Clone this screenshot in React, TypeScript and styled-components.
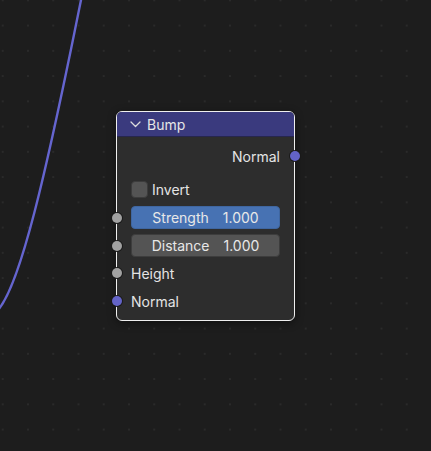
import React from "react";
import styled, { createGlobalStyle } from "styled-components";

const Global = createGlobalStyle`
  html, body { margin: 0; padding: 0; background: #1d1d1d; }
  body { font-family: Inter, "Noto Sans", "DejaVu Sans", sans-serif; }
`;

const Canvas = styled.div`
  position: relative;
  width: 431px;
  height: 451px;
  overflow: hidden;
  background-color: #1d1d1d;
  background-image: radial-gradient(circle, #2a2a2a 0.9px, transparent 1.3px);
  background-size: 25.25px 25.25px;
  background-position: -9.9px -12.3px;
`;

const Link = styled.svg`
  position: absolute;
  left: 0;
  top: 0;
`;

const Node = styled.div<{ $x: number; $y: number; $w: number }>`
  position: absolute;
  left: ${(p) => p.$x}px;
  top: ${(p) => p.$y}px;
  width: ${(p) => p.$w}px;
  box-sizing: border-box;
  border: 1.5px solid #efefef;
  border-radius: 6px;
  background: #2d2d2d;
  box-shadow: 0 2px 8px rgba(0, 0, 0, 0.45);
  color: #e4e4e4;
  font-size: 14px;
`;

const Header = styled.div`
  height: 25px;
  display: flex;
  align-items: center;
  gap: 6px;
  padding-left: 13px;
  background: #3a3a7e;
  border-radius: 4.5px 4.5px 0 0;
  border-bottom: 1px solid #26264f;
  box-sizing: border-box;
  color: #e6e6e6;
`;

const Body = styled.div`
  display: flex;
  flex-direction: column;
  padding: 8px 14px 8px 14px;
`;

const Row = styled.div<{ $align?: "left" | "right"; $mt?: number; $h?: number }>`
  position: relative;
  height: ${(p) => p.$h ?? 22}px;
  margin-top: ${(p) => p.$mt ?? 0}px;
  display: flex;
  align-items: center;
  justify-content: ${(p) => (p.$align === "right" ? "flex-end" : "flex-start")};
  gap: 4px;
`;

const Socket = styled.span<{ $side: "left" | "right"; $color: string }>`
  position: absolute;
  top: 50%;
  ${(p) => (p.$side === "left" ? "left: -19.5px;" : "right: -19.5px;")}
  width: 10px;
  height: 10px;
  margin-top: -5px;
  border-radius: 50%;
  background: ${(p) => p.$color};
  box-shadow: 0 0 0 1px #1a1a1a;
`;

const Check = styled.span`
  width: 17px;
  height: 17px;
  border-radius: 4px;
  background: #545454;
  box-sizing: border-box;
  border: 1px solid #3c3c3c;
`;

const Slider = styled.div<{ $active?: boolean }>`
  flex: 1;
  height: 100%;
  border-radius: 4px;
  background: ${(p) => (p.$active ? "#4772b3" : "#545454")};
  box-sizing: border-box;
  border: 1px solid ${(p) => (p.$active ? "#3f66a0" : "#3d3d3d")};
  display: flex;
  align-items: center;
  justify-content: center;
  gap: 14px;
  color: #e8e8e8;
`;

const Chevron = () => (
  <svg width="11" height="7" viewBox="0 0 11 7">
    <path d="M1 1 L5.5 5.5 L10 1" fill="none" stroke="#dcdcdc" strokeWidth="1.3" strokeLinecap="round" strokeLinejoin="round" />
  </svg>
);

const GRAY = "#a1a1a1";
const VEC = "#6363c7";

export default function App() {
  return (
    <>
      <Global />
      <Canvas>
        <Link width="431" height="451" viewBox="0 0 431 451">
          <path d="M -2 310 C 20 285, 45 180, 82 -5" fill="none" stroke="#6565cf" strokeWidth="2.4" />
        </Link>
        <Node $x={116} $y={111} $w={179}>
          <Header>
            <Chevron />
            <span>Bump</span>
          </Header>
          <Body>
            <Row $align="right">
              Normal
              <Socket $side="right" $color={VEC} />
            </Row>
            <Row $mt={11}>
              <Check />
              Invert
            </Row>
            <Row $mt={6} $h={23}>
              <Socket $side="left" $color={GRAY} />
              <Slider $active>
                <span>Strength</span>
                <span>1.000</span>
              </Slider>
            </Row>
            <Row $mt={5} $h={23}>
              <Socket $side="left" $color={GRAY} />
              <Slider>
                <span>Distance</span>
                <span>1.000</span>
              </Slider>
            </Row>
            <Row $mt={5}>
              <Socket $side="left" $color={GRAY} />
              Height
            </Row>
            <Row $mt={6}>
              <Socket $side="left" $color={VEC} />
              Normal
            </Row>
          </Body>
        </Node>
      </Canvas>
    </>
  );
}
